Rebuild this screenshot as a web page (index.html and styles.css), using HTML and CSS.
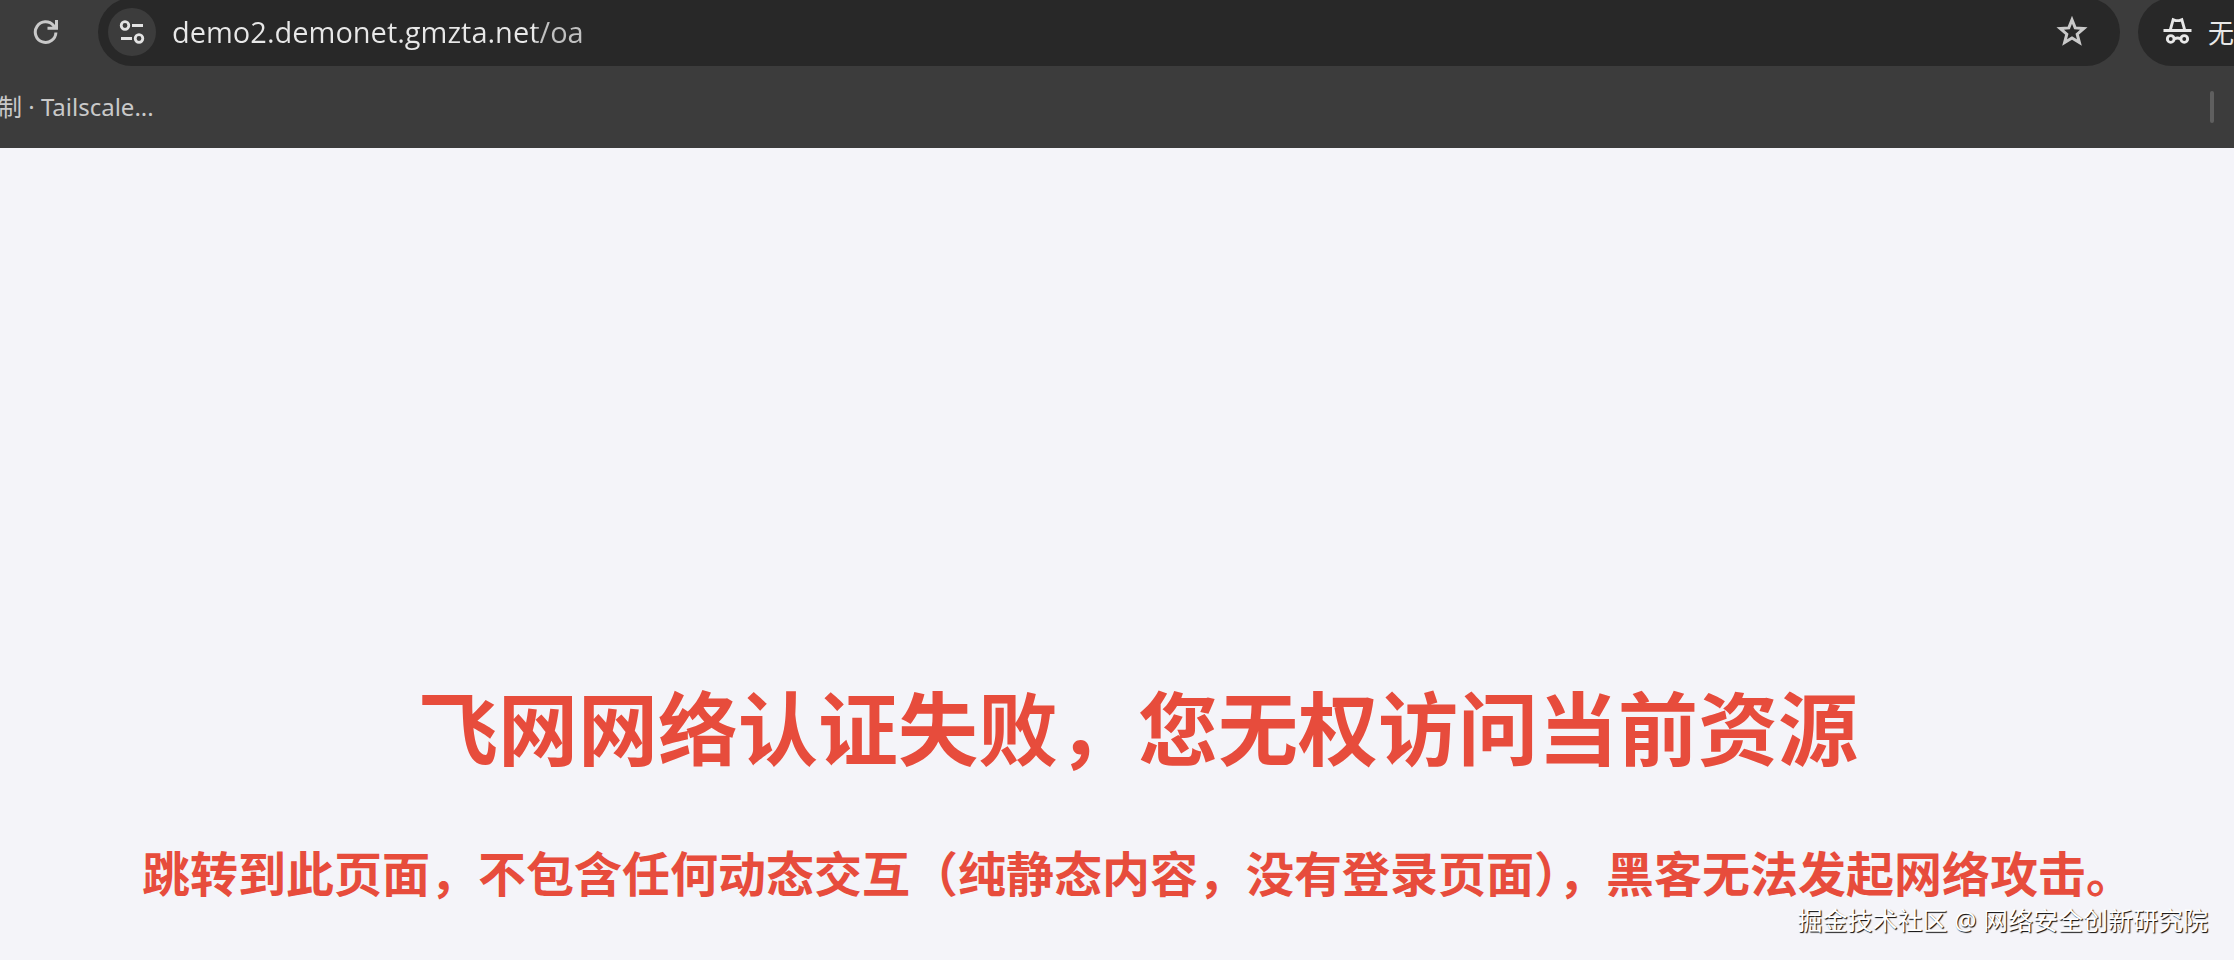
FILE: index.html
```html
<!doctype html>
<html lang="zh-CN">
<head>
<meta charset="utf-8">
<title>demo2.demonet.gmzta.net/oa</title>
<link rel="stylesheet" href="styles.css">
</head>

<body>
<header class="browser">
	<div class="toolbar">
		<button class="icon_btn reload" aria-label="reload">
			<svg width="26" height="26" viewBox="0 0 26 26" fill="none" stroke="currentColor" stroke-width="3"><path d="M22.9 13.5A10.3 10.3 0 1 1 20.5 6.5L23 9M23.5 1V9.2H14.5"/></svg>
		</button>
		<div class="address">
			<button class="icon_btn site_info" aria-label="site info">
				<svg width="26" height="24" viewBox="0 0 26 24" fill="none" stroke="currentColor" stroke-width="2.8"><circle cx="6" cy="5.5" r="3.800"/><path d="M13 5.5H24M2 18.5H13"/><circle cx="20" cy="18.5" r="3.800"/></svg>
			</button>
			<input class="url" type="text" aria-label="url" value="demo2.demonet.gmzta.net/oa">
			<button class="icon_btn star" aria-label="bookmark">
				<svg width="32" height="32" viewBox="0 0 32 32" fill="none" stroke="currentColor" stroke-width="3"><path d="M16 3.8L19.2 11.9L27.8 12.5L21.2 18.2L23.4 26.6L16 22L8.6 26.6L10.8 18.2L4.2 12.5L12.8 11.9Z"/></svg>
			</button>
		</div>
		<button class="incognito">
			<svg width="30" height="30" viewBox="0 0 30 30" fill="none" stroke="currentColor" stroke-width="3"><path d="M0.500 13.500H29.500M7.500 13L10.500 2.200L13 3.200H17L19.500 2.200L22.500 13M12 22Q15 20.500 18 22"/><circle cx="8" cy="22.200" r="3.500"/><circle cx="22" cy="22.200" r="3.500"/></svg>
			<span>无</span>
		</button>
	</div>
	<nav class="bookmarks">
		<a href="#">制 · Tailscale...</a>
		<i class="divider"></i>
	</nav>
</header>
<main class="message">
	<h1>飞网网络认证失败，您无权访问当前资源</h1>
	<h2>跳转到此页面，不包含任何动态交互（纯静态内容，没有登录页面），黑客无法发起网络攻击。</h2>
</main>
<div class="watermark">掘金技术社区 @ 网络安全创新研究院</div>
</body>
</html>
```
FILE: styles.css
```css
* {box-sizing: border-box;}
body {position: relative; margin: 0; min-height: 100vh; overflow: hidden; background: #f4f4f9; font-family: "Noto Sans", "Noto Sans CJK SC", sans-serif;}
button {margin: 0; padding: 0; border: 0; background: none; color: #c9c9c9; font: inherit;}
svg {display: block;}

.browser {height: 148px; overflow: hidden; background: #3c3c3c;}
.toolbar {display: flex; height: 66px; padding-left: 28px;}
.icon_btn {display: flex; flex: none; align-items: center; justify-content: center;}
.reload {width: 36px; height: 64px;}
.address {display: flex; flex: 1; align-items: center; height: 68px; margin: -2px 18px 0 34px; padding: 0 32px 0 10px; border-radius: 34px; background: #282828;}
.site_info {width: 48px; height: 48px; border-radius: 50%; background: #3c3c3c; color: #e3e3e3;}
.url {flex: 1; min-width: 0; height: 48px; margin: 0 16px; padding: 0 0 2px; border: 0; outline: 0; background: linear-gradient(90deg, #e8e8e8 363px, #c0c0c0 363px); background-clip: text; -webkit-background-clip: text; color: transparent; font: 29px "Open Sans", sans-serif;}
.incognito {display: flex; align-items: center; gap: 16px; width: 96px; height: 68px; margin-top: -2px; padding-left: 25px; border-radius: 34px 0 0 34px; background: #282828; color: #e8e8e8; font-size: 26px;}
.bookmarks {display: flex; align-items: center; justify-content: space-between; height: 82px; padding-right: 20px;}
.bookmarks a {margin-left: -2px; padding-bottom: 4px; color: #c9c9c9; font-size: 24px; text-decoration: none;}
.divider {width: 4px; height: 32px; border-radius: 2px; background: #5f5f5f;}

.message {padding: 520px 0 0 42px; color: #e74c3c; text-align: center; white-space: nowrap;}
.message h1 {margin: 0 0 50px; font-size: 80px; line-height: 120px;}
.message h2 {display: flex; justify-content: center; margin: 0; font-size: 48px; line-height: 72px;}

.watermark {position: absolute; right: 26px; bottom: 22px; color: #fff; font-size: 25px; line-height: 36px; text-shadow: 1px 1px 1px #000;}
```
